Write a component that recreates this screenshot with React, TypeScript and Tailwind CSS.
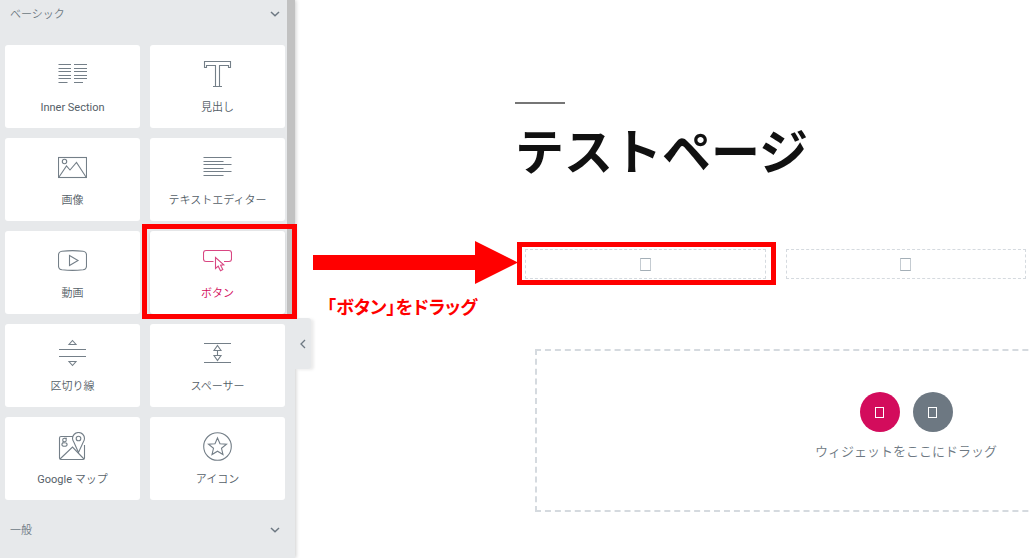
import type { ReactNode } from "react";
import { clsx } from "clsx";

type Widget = {
  label: string;
  icon: ReactNode;
  active?: boolean;
};

const widgets: Widget[] = [
  {
    label: "Inner Section",
    icon: (
      <path d="M0.5 4.5H13M16 4.5H29M0.5 8.5H13M16 8.5H29M0.5 11.5H13M16 11.5H29M0.5 15.5H13M16 15.5H29M0.5 18.5H13M16 18.5H29M0.5 22.5H9.5M16 22.5H25" />
    ),
  },
  {
    label: "見出し",
    icon: <path d="M1.5 1.5H27.5V7.5H25.5V5.5H16.5V26.5H19V26.5H10V26.5H12.5V5.5H3.5V7.5H1.5Z" />,
  },
  {
    label: "画像",
    icon: (
      <>
        <rect x="0.5" y="4.5" width="28" height="20" />
        <circle cx="6.5" cy="8.5" r="2.2" />
        <path d="M1 24L8.5 13L12 17L18.5 9.5L28 24" />
      </>
    ),
  },
  {
    label: "テキストエディター",
    icon: <path d="M0.5 4.5H28.5M0.5 8.5H20.5M0.5 11.5H28.5M0.5 15.5H20.5M0.5 18.5H28.5M0.5 22.5H20.5" />,
  },
  {
    label: "動画",
    icon: (
      <>
        <path d="M4 5.2Q14.5 4 25 5.2Q28.5 5.7 28.5 9V20Q28.5 23.3 25 23.8Q14.5 25 4 23.8Q0.5 23.3 0.5 20V9Q0.5 5.7 4 5.2Z" />
        <path d="M11.5 9.5L20 14.5L11.5 19.5Z" />
      </>
    ),
  },
  {
    label: "ボタン",
    active: true,
    icon: (
      <>
        <path d="M10.5 15.5H3Q0.5 15.5 0.5 13V7Q0.5 4.5 3 4.5H26Q28.5 4.5 28.5 7V13Q28.5 15.5 26 15.5H21" />
        <path d="M12.5 11.5V22.5L15.2 20.2L17.5 24.8L19.8 23.6L17.6 19.2L20.8 18.8Z" />
      </>
    ),
  },
  {
    label: "区切り線",
    icon: <path d="M14.5 1.5L18 5.5H11ZM1 10.5H28M1 17.5H28M11 22.5H18L14.5 26.5Z" />,
  },
  {
    label: "スペーサー",
    icon: <path d="M1 4.5H28M1 23.5H28M14.5 6.5L18 11.5H11ZM14.5 11.5V16.5M11 16.5H18L14.5 21.5Z" />,
  },
  {
    label: "Google マップ",
    icon: (
      <>
        <path d="M15 4.5H3Q1.5 4.5 1.5 6V26Q1.5 27.5 3 27.5H25Q26.5 27.5 26.5 26V13" />
        <path d="M2 27L14.5 15L26 27" />
        <path d="M20.5 20.5L15.8 10Q14.5 8 14.5 6.5A6 6 0 0 1 26.5 6.5Q26.5 8 25.3 10Z" />
        <circle cx="20.5" cy="6.5" r="2.3" />
        <circle cx="6.5" cy="8" r="1.8" />
        <ellipse cx="6.5" cy="12.5" rx="2.6" ry="1.8" />
        <path d="M6.5 6.2H9M5 9.5V11" />
      </>
    ),
  },
  {
    label: "アイコン",
    icon: (
      <>
        <circle cx="14.5" cy="14.5" r="13.8" />
        <path d="M14.5 6L17 11.8L23.5 12.3L18.5 16.3L20 22.5L14.5 19.2L9 22.5L10.5 16.3L5.5 12.3L12 11.8Z" />
      </>
    ),
  },
];

function WidgetCard({ label, icon, active }: Widget) {
  return (
    <div className="relative">
      <button
        type="button"
        className={clsx(
          "flex h-[83px] w-full flex-col items-center gap-[13px] rounded-[3px] bg-white pt-[15px] text-[11px] leading-3",
          active ? "text-[#d30c5c] shadow-sm" : "text-[#556068]"
        )}
      >
        <svg
          viewBox="0 0 29 29"
          className={clsx("size-[29px] fill-none stroke-[1.1]", active ? "stroke-[#d94682]" : "stroke-[#747f88]")}
          aria-hidden="true"
        >
          {icon}
        </svg>
        <span className="whitespace-nowrap">{label}</span>
      </button>
      {active && (
        <div className="pointer-events-none absolute -top-[7px] -right-3 -bottom-[5px] -left-2 z-20 border-5 border-[#ff0000]" />
      )}
    </div>
  );
}

function SectionHeading({ children }: { children: string }) {
  return (
    <button
      type="button"
      className="flex h-7 w-full items-center justify-between px-[5px] text-[11px] text-[#6d7882]"
    >
      <span className="pt-[2px]">{children}</span>
      <svg viewBox="0 0 10 6" className="h-[6px] w-[10px] fill-none stroke-[#6d7882] stroke-[1.5]" aria-hidden="true">
        <path d="M1 1L5 4.8L9 1" />
      </svg>
    </button>
  );
}

function Panel() {
  return (
    <aside className="relative z-10 w-[295px] shrink-0 bg-[#e7e9eb] shadow-[1px_0_4px_rgba(0,0,0,0.2)]">
      <div className="absolute top-0 right-0 h-[317px] w-2 bg-[#c1c1c1]" />
      <div className="w-[290px] px-[5px]">
        <SectionHeading>ベーシック</SectionHeading>
        <div className="mt-[17px] mb-4 grid grid-cols-2 gap-[10px]">
          {widgets.map((widget) => (
            <WidgetCard key={widget.label} {...widget} />
          ))}
        </div>
        <SectionHeading>一般</SectionHeading>
      </div>
      <button
        type="button"
        aria-label="パネルを隠す"
        className="absolute top-[318px] left-full flex h-[51px] w-4 items-center justify-center rounded-r-[3px] bg-[#e7e9eb] shadow-[3px_1px_3px_rgba(0,0,0,0.08)]"
      >
        <svg viewBox="0 0 6 10" className="h-[10px] w-[6px] fill-none stroke-[#6d7882] stroke-[1.3]" aria-hidden="true">
          <path d="M5 1L1 5L5 9" />
        </svg>
      </button>
    </aside>
  );
}

function EmptyColumn({ highlighted }: { highlighted?: boolean }) {
  return (
    <div className="relative p-[10px]">
      <div className="flex h-[30px] items-center justify-center border border-dashed border-[#d5dadf]">
        <span className="h-[13px] w-[11px] border border-x-[#c4cbd1] border-y-[#a4afb7]" />
      </div>
      {highlighted && (
        <div className="pointer-events-none absolute top-[3px] right-0 bottom-1 left-[2px] border-5 border-[#ff0000]" />
      )}
    </div>
  );
}

function RoundButton({ label, className }: { label: string; className: string }) {
  return (
    <button
      type="button"
      aria-label={label}
      className={clsx("flex size-10 items-center justify-center rounded-full", className)}
    >
      <span className="h-[11px] w-[9px] border border-white" />
    </button>
  );
}

export default function App() {
  return (
    <div className="relative flex min-h-screen overflow-hidden bg-white font-[Roboto,'Noto_Sans_CJK_JP_DemiLight','Noto_Sans_CJK_JP',sans-serif]">
      <Panel />

      <main className="min-w-0 flex-1 pt-[102px] pl-[220px]">
        <div className="w-[782px]">
          <div className="h-[2px] w-[50px] bg-[#767676]" />
          <h1 className="mt-[11px] text-[49px] leading-[67px] font-bold text-[#111] font-['Noto_Sans_CJK_JP',sans-serif]">
            テストページ
          </h1>

          <div className="mt-[57px] grid grid-cols-3">
            <EmptyColumn highlighted />
            <EmptyColumn />
          </div>

          <div className="mx-5 mt-[60px] flex h-[163px] flex-col items-center border-2 border-dashed border-[#d5dadf] pt-[41px]">
            <div className="flex gap-[13px]">
              <RoundButton label="セクションを追加" className="bg-[#d30c5c]" />
              <RoundButton label="テンプレートを追加" className="bg-[#6d7882]" />
            </div>
            <p className="mt-[10px] text-[13px] leading-5 text-[#6d7882]">ウィジェットをここにドラッグ</p>
          </div>
        </div>
      </main>

      {/* drag hint drawn over the editor */}
      <div className="pointer-events-none absolute top-[241px] left-[313px] z-20 w-[205px]">
        <svg viewBox="0 0 205 43" className="h-[43px] w-full fill-[#ff0000]" aria-hidden="true">
          <path d="M0 14H162V0L205 21.5L162 43V29H0Z" />
        </svg>
        <p className="mt-3 pl-[14px] text-lg leading-5 font-bold whitespace-nowrap text-[#ff0000] font-['Noto_Sans_CJK_JP',sans-serif] [font-feature-settings:'palt']">
          「ボタン」をドラッグ
        </p>
      </div>
    </div>
  );
}
